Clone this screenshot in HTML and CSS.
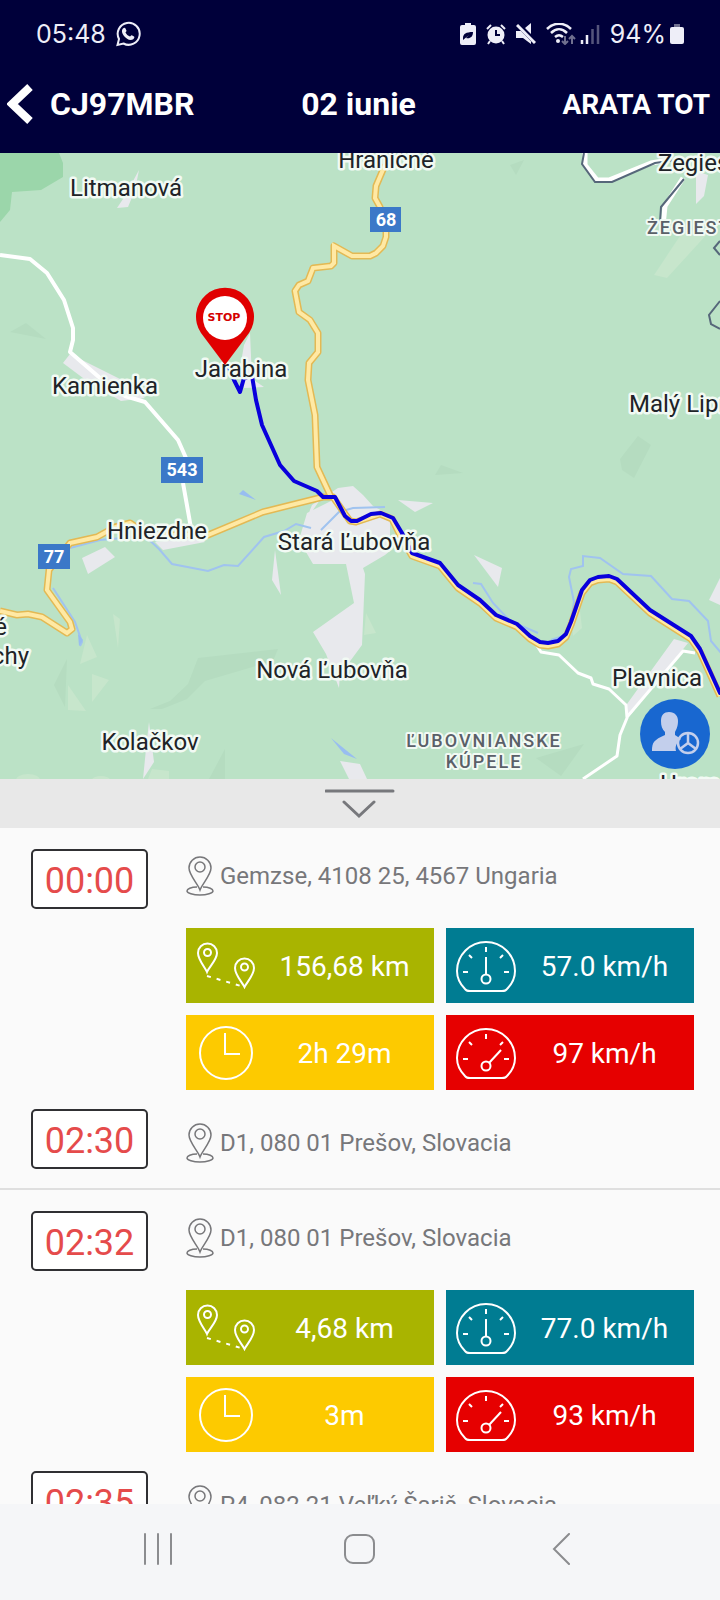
FILE: index.html
```html
<!DOCTYPE html>
<html lang="ro">
<head>
    <meta charset="UTF-8">
    <meta name="viewport" content="width=device-width, initial-scale=1.0">
    <title>CJ97MBR - 02 iunie</title>
    <link rel="stylesheet" href="styles.css">
</head>
<body>
    <!-- Icons used more than once -->
    <svg class="sprite" aria-hidden="true">
        <symbol id="pin" viewBox="0 0 28 40">
            <path d="M14 34C12 28 3 19 3 12a11 11 0 0 1 22 0c0 7-9 16-11 22z"/>
            <circle cx="14" cy="11" r="5"/>
            <path d="M11 31C5 31 1 33 1 35c0 2 6 4 13 4s13-2 13-4c0-2-4-4-10-4"/>
        </symbol>
        <symbol id="distance" viewBox="0 0 60 60">
            <path d="M11 36C9 31 2 24 2 17a9.500 9.500 0 0 1 19 0c0 7-8 14-10 19z"/>
            <circle cx="11.500" cy="16.500" r="3.500"/>
            <path d="M48.500 51C46 46 39 39 39 32a9.500 9.500 0 0 1 19 0c0 7-7 14-9.500 19z"/>
            <circle cx="48.500" cy="31" r="3.500"/>
            <path d="M11 40L45 50" stroke-dasharray="4 6"/>
        </symbol>
        <symbol id="clock" viewBox="0 0 60 60">
            <circle cx="30" cy="30" r="26"/>
            <path d="M29 10v21h15"/>
        </symbol>
        <symbol id="dial" viewBox="0 0 60 60">
            <path d="M9 53C4 48 1 42 1 35a29 29 0 0 1 58 0c0 7-3 13-8 18-1 2-3 2-5 2H14c-2 0-4 0-5-2z"/>
            <path d="M7 36h5M48 36h5M30 11v5M13 19l3 3M47 19l-3 3"/>
        </symbol>
    </svg>

    <header class="header">
        <div class="status-bar">
            <span class="status-text">05:48</span>
            <svg class="whatsapp" width="26" height="26" viewBox="0 0 26 26">
                <path d="M2.500 24l1.500-6a11 11 0 1 1 4.500 4.500z" fill="none" stroke="#eeeef8" stroke-width="2"/>
                <path d="M8 7.500c1-1 2-1 2.500 0l1 2.300c0 .800-.8 1.200-1 1.700 1 2 2.300 3.200 4.500 4 .7-.2 1-1.500 1.800-1.300l2.200 1.200c.8.600.2 2-.8 2.800-3 2-7-.5-9-3-2-2.300-3.200-5.500-1.200-7.700z" fill="#eeeef8"/>
            </svg>
            <div class="status-icons">
                <svg width="16" height="22" viewBox="0 0 16 22">
                    <path d="M5 0h6v2h3a2 2 0 0 1 2 2v16a2 2 0 0 1-2 2H2a2 2 0 0 1-2-2V4a2 2 0 0 1 2-2h3z" fill="#eeeef8"/>
                    <path d="M3 15c0-4 3-6 10-6 0 5-3 7-7 6l3-3-6 5z" fill="#00003a"/>
                </svg>
                <svg width="20" height="22" viewBox="0 0 20 22">
                    <circle cx="10" cy="12" r="8.500" fill="#eeeef8"/>
                    <path d="M1 6l4-4M19 6l-4-4M4 18l-2 3M16 18l2 3" stroke="#eeeef8" stroke-width="2"/>
                    <path d="M10 7v5h4" fill="none" stroke="#00003a" stroke-width="2"/>
                </svg>
                <svg width="20" height="22" viewBox="0 0 20 22">
                    <path d="M0 8h5l3 3 7 7v3l-8-6H0zM9 5l6-5v11z" fill="#eeeef8"/>
                    <path d="M2 1l17 19" stroke="#00003a" stroke-width="4"/>
                    <path d="M1 2l18 18" stroke="#eeeef8" stroke-width="3"/>
                </svg>
                <svg class="wifi" width="30" height="22" viewBox="0 0 30 22">
                    <path d="M1 6c7-7 17-7 24 0M5 10c5-5 11-5 16 0M9 14c3-2.500 5-2.500 8 0" fill="none" stroke="#eeeef8" stroke-width="2.500"/>
                    <circle cx="12" cy="18" r="2" fill="#eeeef8"/>
                    <path d="M19 13v8M16 18l3 3 3-3M26 21v-8M23 16l3-3 3 3" fill="none" stroke="#70708f" stroke-width="2"/>
                </svg>
                <svg width="20" height="22" viewBox="0 0 20 22">
                    <path d="M2 17v4M7 12v9" stroke="#eeeef8" stroke-width="2.500"/>
                    <path d="M12.500 6v15M18 2v19" stroke="#55557c" stroke-width="2.500"/>
                </svg>
                <span class="status-text">94%</span>
                <svg class="battery" width="14" height="22" viewBox="0 0 14 22">
                    <path d="M4 1h6v3H4z" fill="#70708f"/>
                    <rect y="4" width="14" height="17" rx="2" fill="#eeeef8"/>
                </svg>
            </div>
        </div>
        <div class="title-bar">
            <button class="back" aria-label="Înapoi">
                <svg width="26" height="40" viewBox="0 0 26 40"><path d="M23 3L5 20l18 17" fill="none" stroke="#fff" stroke-width="8"/></svg>
                <span>CJ97MBR</span>
            </button>
            <h1>02 iunie</h1>
            <button class="show-all">ARATA TOT</button>
        </div>
    </header>

    <section class="map">
        <!-- user units follow screen pixels, with the map starting at y = 153 -->
        <svg class="map-canvas" viewBox="0 153 720 626" preserveAspectRatio="xMidYMid slice">
            <rect y="153" width="720" height="626" fill="#bbe2c6"/>
            <path fill="#9bd6aa" d="M0 153h59l4 10v14l-22 13-29 2-2 18-10 12z"/>
            <g fill="#b5dcc0">
                <path d="M150 709l20-8 18-17 10-26 80-9-5 12-68 20-18 18-25 10zM54 685l13-26-2 48zM10 332l16-9 20 16zM209 779l16-30v30zM620 459l18-23 13 9-17 33-12-8zM435 475l6-10 22 8zM510 165l14-5-8 15zM536 758l48-14-23 32z"/>
            </g>
            <g fill="#c7e6cc">
                <path d="M80 664l7-29 10 22zM113 614l7 5-2 29zM92 674l17 6-17 22zM68 685l18 26-18-1zM654 275l30-45 25 2-42 46zM364 635l2-22 10 20zM572 625l8-14 2 17-9 8zM148 779l4-10 17 2v8z"/>
                <ellipse cx="28" cy="780" rx="12" ry="6"/>
                <ellipse cx="101" cy="780" rx="9" ry="4"/>
            </g>
            <g fill="#e8e9ed">
                <path d="M117 208l8-12 14-26-4 20-7 17zM63 363l7-9 52 26 23 18-24 3-34-20zM244 345l6-12 2 46 12 8-20 1-4-20zM82 558l23-11 10 10-27 17zM155 542l45-5 5 5-42 8z"/>
                <path d="M306 520l6-15 26-17 15-2 10 9 10 11 17 9v36l-5 4-22 13 2 6-3 71-14 19-8 8-1 16-13-34-13-22 41-29-8-39h-33l-14-24 8-27 24-12-2-14zM275 550l6 45-9-15zM398 500l35 3-18 9zM474 555l28 13-4 19zM149 722l5 40-11 17 3-30zM340 761l20 3 7 15h-18zM674 639l14 4-60 75-1-14zM709 600l11-22v27zM696 171l12 4-4 21-8 8z"/>
            </g>
            <g fill="none" stroke="#a0c3ef" stroke-width="2">
                <path d="M53 588l22 34 7 20-2 4M70 548l30-8 45-4 14 13 13 15 36 7 16-6 14 1 26-29 20-6 12-7 15 4M321 530l18-18 14-4 32-1"/>
                <path d="M473 583l8 1 12 19 17 18 28 12M551 640l18-6 5-32-5-25 2-8 12-3v-10l17 2 23 16 28 2 21 23 17 2 19 20 3 20 11 13"/>
            </g>
            <path fill="#98bdf0" d="M239 494l4-4 13 10zM331 738l26 21-13-5zM78 634l5 6-4 6z"/>

            <g class="roads-white">
                <path d="M0 255l30 4 17 14 17 27 9 28v12l-3 12 30 26 25 18 20 6 33 38 8 18M183 483l8 45" stroke-width="4"/>
                <path d="M536 644l5 8 18 3 19 18 13 5 2 6 16 5 17 16 1 13-7 17-3 21-34 23M627 717l56-66 12 2" stroke-width="3"/>
                <path d="M585 153v12l12 15h12l42-17 18-3M683 178l-18 28-2 20" stroke-width="5"/>
            </g>
            <path class="border-line" d="M584 153l-2 11 13 18h17l43-19 21-3M684 179l-23 28-1 15M720 241l-6 7 6 7M720 301l-11 14 2 9 9 5"/>

            <g class="road-edge">
                <path id="road68" d="M385 165l-9 21-1 12 5 9 6 22v8l-3 9-7 7-6 3h-18l-18-10v17l-3 3-18 2-5 13-9 4-4 6 4 21 11 8 8 13v19l-9 11-1 17 7 35 2 52 14 30"/>
                <path id="road77" d="M0 611l17 4 11-1 14 3 25 16 5-4-2-7-23-32 2-20 21-27 27-6 18-10 15-4 18 12h60l55-23 60-15h10l17 24 6 1 24-8 12 5 10 20 10 17 28 10 18 22 22 15 16 15 21 9 13 12 10 6 8 1 10-2 8-7 5-12 11-32 8-10 8-3 11-1 8 3 33 31 41 26 9 13 20 44"/>
            </g>
            <g class="road-fill">
                <use href="#road68"/>
                <use href="#road77"/>
            </g>
            <path class="route" d="M229 368l5 12 6 12 4-14 8-2 4 24 6 25 18 40 14 16 23 10 6 6h12l10 19 6 5h6l14-7 10-1 12 5 9 15 10 20 28 10 18 22 22 15 16 15 21 9 13 12 10 6 8 1 10-2 8-7 5-12 11-32 8-10 8-3 11-1 8 3 33 31 41 26 9 13 20 44"/>

            <g class="shields">
                <rect x="370" y="207" width="31" height="25"/>
                <rect x="161" y="457" width="42" height="26"/>
                <rect x="38" y="544" width="32" height="25"/>
                <text x="386" y="226">68</text>
                <text x="182" y="476">543</text>
                <text x="54" y="563">77</text>
            </g>
            <g class="places">
                <text x="126" y="196">Litmanová</text>
                <text x="386" y="168">Hraničné</text>
                <text x="105" y="394">Kamienka</text>
                <text x="241" y="377">Jarabina</text>
                <text x="157" y="539">Hniezdne</text>
                <text x="354" y="550">Stará Ľubovňa</text>
                <text x="332" y="678">Nová Ľubovňa</text>
                <text x="150" y="750">Kolačkov</text>
                <text x="657" y="686">Plavnica</text>
            </g>
            <g class="places edge-right">
                <text x="658" y="171">Żegiestów</text>
                <text x="629" y="412">Malý Lipník</text>
                <text x="660" y="792">Hromoš</text>
            </g>
            <g class="places edge-left">
                <text x="7" y="635">Vyšné</text>
                <text x="29" y="664">Ružbachy</text>
            </g>
            <g class="areas">
                <text x="484" y="747">ĽUBOVNIANSKE</text>
                <text x="484" y="768">KÚPELE</text>
                <text class="area-start" x="647" y="234">ŻEGIESTÓW</text>
            </g>

            <path fill="#e00000" d="M225 365l-24-32a29 29 0 1 1 48 0z"/>
            <circle cx="225" cy="318" r="22" fill="#fff"/>
            <text class="stop" x="224" y="321">STOP</text>
        </svg>
        <button class="driver" aria-label="Șofer">
            <svg width="70" height="70" viewBox="0 0 70 70">
                <path d="M29 13c6 0 9 4 9 9 0 6-2 9-3 11v3l6 4c-5 4-6 8-5 12H12c0-9 2-11 13-16v-3c-3-3-4-6-4-11 0-6 3-9 8-9z" fill="#c3cfec"/>
                <g fill="none" stroke="#c3cfec" stroke-width="2.500">
                    <circle cx="48" cy="44" r="10"/>
                    <path d="M48 34v10l-8 6M48 44l8 6"/>
                </g>
            </svg>
        </button>
    </section>

    <button class="handle" aria-label="Extinde lista">
        <svg width="70" height="32" viewBox="0 0 70 32"><path d="M1 3h67M19 14l15 14 15-14"/></svg>
    </button>

    <main class="trips">
        <article class="trip">
            <time class="time">00:00</time>
            <p class="place"><svg><use href="#pin"/></svg>Gemzse, 4108 25, 4567 Ungaria</p>
            <div class="stats">
                <div class="stat distance"><svg><use href="#distance"/></svg><span>156,68 km</span></div>
                <div class="stat average"><svg viewBox="0 0 60 60"><use href="#dial"/><circle cx="30" cy="43" r="4.500"/><path d="M30 38V21"/></svg><span>57.0 km/h</span></div>
                <div class="stat duration"><svg><use href="#clock"/></svg><span>2h 29m</span></div>
                <div class="stat maximum"><svg viewBox="0 0 60 60"><use href="#dial"/><circle cx="30" cy="43" r="4.500"/><path d="M33 40l12-13"/></svg><span>97 km/h</span></div>
            </div>
            <time class="time">02:30</time>
            <p class="place place-end"><svg><use href="#pin"/></svg>D1, 080 01 Prešov, Slovacia</p>
        </article>
        <article class="trip">
            <time class="time">02:32</time>
            <p class="place"><svg><use href="#pin"/></svg>D1, 080 01 Prešov, Slovacia</p>
            <div class="stats">
                <div class="stat distance"><svg><use href="#distance"/></svg><span>4,68 km</span></div>
                <div class="stat average"><svg viewBox="0 0 60 60"><use href="#dial"/><circle cx="30" cy="43" r="4.500"/><path d="M30 38V21"/></svg><span>77.0 km/h</span></div>
                <div class="stat duration"><svg><use href="#clock"/></svg><span>3m</span></div>
                <div class="stat maximum"><svg viewBox="0 0 60 60"><use href="#dial"/><circle cx="30" cy="43" r="4.500"/><path d="M33 40l12-13"/></svg><span>93 km/h</span></div>
            </div>
            <time class="time">02:35</time>
            <p class="place place-end"><svg><use href="#pin"/></svg>P4, 082 21 Veľký Šariš, Slovacia</p>
        </article>
    </main>

    <nav class="nav">
        <button aria-label="Aplicații recente"><svg width="32" height="32" viewBox="0 0 32 32"><path d="M2 1v30M15 1v30M28 1v30"/></svg></button>
        <button aria-label="Acasă"><svg width="32" height="32" viewBox="0 0 32 32"><rect x="1" y="2" width="29" height="28" rx="8"/></svg></button>
        <button aria-label="Înapoi"><svg width="32" height="32" viewBox="0 0 32 32"><path d="M24 1L9 16l15 15"/></svg></button>
    </nav>
</body>
</html>
```
FILE: styles.css
```css
* {
    box-sizing: border-box;
}
body {
    display: flex;
    flex-direction: column;
    height: 100vh;
    margin: 0;
    background-color: #fafafa;
    font-family: Roboto, "Liberation Sans", sans-serif;
}
button {
    padding: 0;
    border: none;
    background: none;
    color: inherit;
    font-family: inherit;
    cursor: pointer;
}
svg {
    display: block;
    flex-shrink: 0;
}
.sprite {
    position: absolute;
    width: 0;
    height: 0;
}

/* Header */
.header {
    flex-shrink: 0;
    background-color: #00003a;
    color: #fff;
}
.status-bar {
    display: flex;
    align-items: center;
    padding: 18px 36px 18px 36px;
}
.status-text {
    color: #eeeef8;
    font-family: Inter, sans-serif;
    font-size: 25px;
    font-weight: 400;
    line-height: 32px;
}
.whatsapp {
    margin-left: 9px;
}
.status-icons {
    display: flex;
    align-items: center;
    gap: 10px;
    margin-left: auto;
}
.wifi {
    margin-right: -6px;
}
.battery {
    margin-left: -6px;
}
.title-bar {
    display: grid;
    grid-template-columns: 1fr auto 1fr;
    align-items: center;
    padding: 16px 10px 29px 7px;
    line-height: 40px;
}
.title-bar h1 {
    margin: 0;
    font-size: 32px;
    font-weight: 700;
}
.back {
    display: flex;
    align-items: center;
    gap: 17px;
    font-size: 32px;
    font-weight: 700;
}
.show-all {
    justify-self: end;
    font-size: 28px;
    font-weight: 700;
}

/* Map */
.map {
    position: relative;
    flex-shrink: 0;
    aspect-ratio: 720 / 626;
}
.map-canvas {
    width: 100%;
    height: 100%;
}
.roads-white path {
    fill: none;
    stroke: #fff;
    stroke-linejoin: round;
}
.border-line {
    fill: none;
    stroke: #56677a;
    stroke-width: 2;
}
.road-edge {
    fill: none;
    stroke: #e3b954;
    stroke-width: 7;
    stroke-linejoin: round;
}
.road-fill use {
    fill: none;
    stroke: #ffe9a4;
    stroke-width: 4;
}
.route {
    fill: none;
    stroke: #0a00dc;
    stroke-width: 4;
    stroke-linejoin: round;
    stroke-linecap: round;
}
.shields rect {
    fill: #3b78c8;
}
.shields text {
    fill: #fff;
    font-size: 18px;
    font-weight: 700;
    text-anchor: middle;
}
.places text {
    fill: #202327;
    stroke: #f2faf4;
    stroke-width: 5;
    stroke-linejoin: round;
    paint-order: stroke;
    font-size: 24px;
    text-anchor: middle;
}
.edge-right text {
    text-anchor: start;
}
.edge-left text {
    text-anchor: end;
}
.areas text {
    fill: #5a6068;
    stroke: #f2faf4;
    stroke-width: 4;
    stroke-linejoin: round;
    paint-order: stroke;
    font-size: 18px;
    font-weight: 500;
    letter-spacing: 2px;
    text-anchor: middle;
}
.areas .area-start {
    text-anchor: start;
}
.stop {
    fill: #d40000;
    font-family: "DejaVu Sans", sans-serif;
    font-size: 11px;
    font-weight: 700;
    text-anchor: middle;
}
.driver {
    position: absolute;
    right: 10px;
    bottom: 10px;
    border-radius: 50%;
    background-color: #1867d0;
}

/* Handle between the map and the list */
.handle {
    display: flex;
    flex-shrink: 0;
    justify-content: center;
    padding: 9px 0 8px;
    background-color: #e8e8e8;
}
.handle path {
    fill: none;
    stroke: #77787c;
    stroke-width: 3;
    stroke-linecap: round;
}

/* Trips */
.trips {
    flex: 1;
    min-height: 0;
    overflow: hidden;
}
.trip {
    display: grid;
    grid-template-columns: 117px 1fr;
    column-gap: 38px;
    row-gap: 19px;
    padding: 21px 26px 19px 31px;
    border-bottom: 2px solid #dfdfdf;
}
.time {
    padding: 8px 0 4px;
    border: 2px solid #303033;
    border-radius: 5px;
    background-color: #fff;
    color: #e54b4b;
    font-size: 36px;
    line-height: 44px;
    text-align: center;
}
.place {
    display: flex;
    align-items: center;
    align-self: start;
    gap: 6px;
    margin: 0;
    padding-top: 7px;
    color: #77777a;
    font-size: 24px;
    line-height: 40px;
    white-space: nowrap;
}
.place-end {
    padding-top: 14px;
}
.place svg {
    width: 28px;
    height: 40px;
    fill: none;
    stroke: #77777a;
    stroke-width: 1.5;
}
.stats {
    grid-column: 2;
    display: grid;
    grid-template-columns: 1fr 1fr;
    gap: 12px;
}
.stat {
    display: flex;
    align-items: center;
    padding: 8px 10px 7px;
    color: #fff;
    font-size: 28px;
    line-height: 58px;
}
.stat svg {
    width: 60px;
    height: 60px;
    fill: none;
    stroke: #fff;
    stroke-width: 2;
}
.stat span {
    flex: 1;
    padding: 2px 0 0 9px;
    text-align: center;
}
.distance {
    background-color: #a9b400;
}
.average {
    background-color: #007c92;
}
.duration {
    background-color: #fdca00;
}
.maximum {
    background-color: #e60000;
}

/* System navigation */
.nav {
    display: grid;
    grid-template-columns: repeat(3, 1fr);
    flex-shrink: 0;
    padding: 29px 58px 35px;
    background-color: #f5f6f8;
}
.nav button {
    display: flex;
    justify-content: center;
}
.nav svg {
    fill: none;
    stroke: #8b8c8f;
    stroke-width: 2;
    stroke-linecap: round;
}
```
